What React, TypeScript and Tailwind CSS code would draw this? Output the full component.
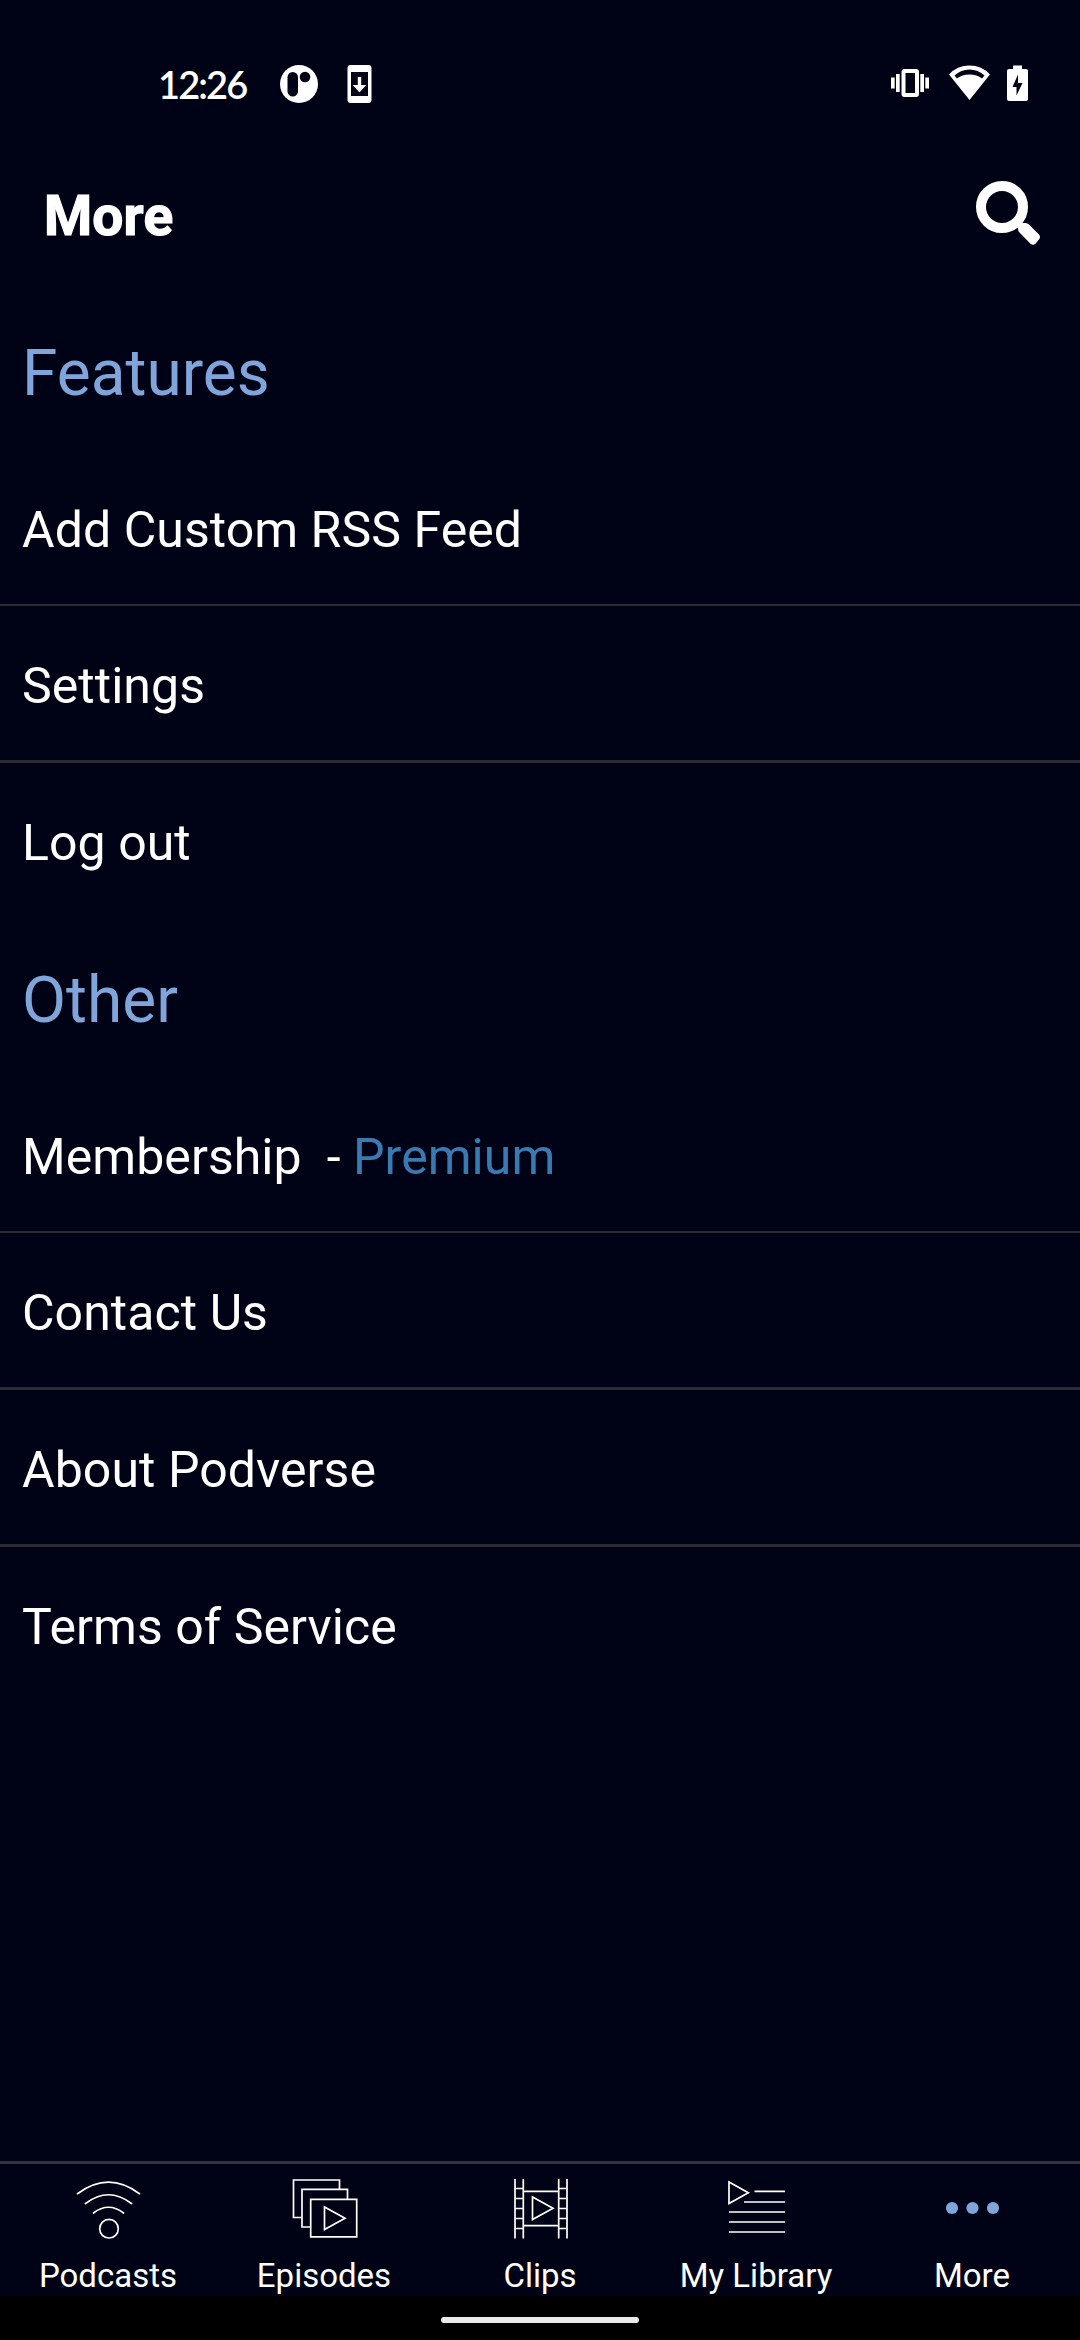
import React from "react";

const sections = [
  {
    title: "Features",
    rows: [
      { label: "Add Custom RSS Feed", box: "h-[158px] border-b-2 pt-[8px]" },
      { label: "Settings", box: "h-[157px] border-b-3 pt-[6px]" },
      { label: "Log out", box: "h-[156px] pt-[4px]" },
    ],
  },
  {
    title: "Other",
    rows: [
      { label: "Membership", extra: "Premium", box: "h-[158px] border-b-2 pt-[8px]" },
      { label: "Contact Us", box: "h-[157px] border-b-3 pt-[6px]" },
      { label: "About Podverse", box: "h-[157px] border-b-3 pt-[6px]" },
      { label: "Terms of Service", box: "h-[156px] pt-[4px]" },
    ],
  },
];

function StatusBar() {
  return (
    <div className="flex h-[140px] items-start justify-between pl-[158px] pr-[50px] pt-[62px] text-white">
      <div className="flex items-center">
        <span className="w-[121px] whitespace-nowrap font-['Lato'] text-[38px] font-semibold leading-[44px] tracking-[-1.9px]">12:26</span>
        <svg className="-mt-px h-[40px] w-[40px]" viewBox="0 0 40 40">
          <circle cx="20" cy="20" r="19" fill="white" />
          <rect x="8.5" y="8" width="10.5" height="24.5" rx="5.2" fill="#000315" />
          <circle cx="26" cy="13" r="5.3" fill="#000315" />
        </svg>
        <svg className="-mt-px ml-[28px] h-[40px] w-[25px]" viewBox="0 0 25 40">
          <path fillRule="evenodd" fill="white" d="M3.5 1h18a3 3 0 0 1 3 3v32a3 3 0 0 1-3 3h-18a3 3 0 0 1-3-3V4a3 3 0 0 1 3-3zM4 8v24h17V8z" />
          <path fill="white" d="M10.8 13h3.4v8h5L12.5 28.500 5.800 21h5z" />
        </svg>
      </div>
      <svg className="h-[40px] w-[140px]" viewBox="890 62 140 40">
        <g fill="white">
          <path fillRule="evenodd" d="M904.500 69h11.500a3 3 0 0 1 3 3v22a3 3 0 0 1-3 3h-11.500a3 3 0 0 1-3-3V72a3 3 0 0 1 3-3zM905.500 73v20h9.500V73z" />
          <path d="M896 74h3.700v18H896zM891 77.500h3.700v11H891zM920.300 74h3.700v18h-3.700zM925.300 77.500h3.700v11h-3.700z" />
          <path fillRule="evenodd" d="M969.500 100 949 74.500Q957 65.500 969.500 65.500T990 74.500zM954.500 75.500 957 78.500Q962 74.500 969.500 74.500T982 78.500L984.500 75.500Q978 69.500 969.500 69.500T954.500 75.500z" />
          <path fillRule="evenodd" d="M1013 65.500h9V69h4a2 2 0 0 1 2 2v28a2 2 0 0 1-2 2h-17a2 2 0 0 1-2-2V71a2 2 0 0 1 2-2h4zM1018 74.500 1012.500 87h4v8.500L1022.500 83h-4.500z" />
        </g>
      </svg>
    </div>
  );
}

function Header() {
  return (
    <header className="flex h-[152px] items-start justify-between pl-[44px] pr-[39px] pt-[40px]">
      <h1 className="pt-px text-[55px] font-bold leading-[70px] tracking-[0.2px] text-white [-webkit-text-stroke:1.2px_white]">More</h1>
      <svg className="h-[66px] w-[66px]" viewBox="975 180 66 66">
        <circle cx="1002" cy="207" r="21" fill="none" stroke="white" strokeWidth="10" />
        <path fill="white" d="M1018 226.500L1022 223H1025.500Q1027.500 223 1029 224.500L1039 234.500Q1041 237 1039 239.500L1035.500 243.700Q1033 246 1030.500 243.700L1019.500 232.500Q1018 231 1018 229z" />
      </svg>
    </header>
  );
}

const play = "M0 0V22.500L20.500 11.250z";

const tabs = [
  {
    label: "Podcasts",
    icon: (
      <svg className="h-[64px] w-[70px]" viewBox="73 2177 70 64" fill="none" stroke="white" strokeWidth="1.700" strokeLinecap="round">
        <path d="M77.500 2193.700Q108.500 2170.500 139.500 2193.700M85.500 2203.500Q108.500 2186 131.500 2203.500M93.500 2213Q108.500 2201.500 123.500 2213" />
        <circle cx="109" cy="2228.700" r="9.300" />
      </svg>
    ),
  },
  {
    label: "Episodes",
    icon: (
      <svg className="h-[64px] w-[70px]" viewBox="289 2177 70 64" fill="none" stroke="white" strokeWidth="1.700">
        <path d="M301.500 2217.500H293.500V2180H339.500V2189M310 2227H302V2189.300H347.500V2199" />
        <path d="M310.700 2199.300h46v37.500h-46z" />
        <path transform="translate(324.500 2207)" d={play} />
      </svg>
    ),
  },
  {
    label: "Clips",
    icon: (
      <svg className="h-[64px] w-[70px]" viewBox="505 2177 70 64" fill="none" stroke="white" strokeWidth="1.700">
        <path d="M515 2179V2238.500M523.300 2179V2238.500M558.700 2179V2238.500M567 2179V2238.500M523 2191.300H559M523 2225.700H559" />
        <path d="M515 2188.500h8M515 2198.500h8M515 2208.500h8M515 2218.500h8M515 2228.500h8M559 2188.500h8M559 2198.500h8M559 2208.500h8M559 2218.500h8M559 2228.500h8" />
        <path transform="translate(532.500 2197)" d={play} />
      </svg>
    ),
  },
  {
    label: "My Library",
    icon: (
      <svg className="h-[64px] w-[70px]" viewBox="721 2177 70 64" fill="none" stroke="white" strokeWidth="1.700">
        <path d="M754.500 2191.300H785M744 2202H785M729 2212H785M729 2222H785M729 2232H785" />
        <path transform="translate(729 2182)" d="M0 0V21.500L19.300 10.750z" />
      </svg>
    ),
  },
  {
    label: "More",
    icon: (
      <svg className="h-[64px] w-[70px]" viewBox="937 2177 70 64" fill="#7fa5da">
        <circle cx="952" cy="2208" r="6.100" />
        <circle cx="972.500" cy="2208" r="6.100" />
        <circle cx="993" cy="2208" r="6.100" />
      </svg>
    ),
  },
];

export default function App() {
  return (
    <div className="flex h-[2340px] w-[1080px] flex-col overflow-hidden bg-[#000315] font-['Roboto',sans-serif]">
      <StatusBar />
      <Header />
      <main className="flex-1">
        {sections.map((s) => (
          <section key={s.title}>
            <h2 className="flex h-[156px] items-center pl-[22px] pt-[8px] text-[64px] leading-none text-[#7fa5da]">{s.title}</h2>
            {s.rows.map((r) => (
              <div key={r.label} className={`flex items-center whitespace-pre border-[#2c2a33] pl-[22px] text-[50px] leading-none tracking-[0.06px] text-white ${r.box}`}>
                {r.label}
                {"extra" in r && (
                  <>
                    <span>{"  - "}</span>
                    <span className="text-[#3a7ab3]">{r.extra}</span>
                  </>
                )}
              </div>
            ))}
          </section>
        ))}
      </main>
      <nav className="grid h-[135px] grid-cols-5 border-t-3 border-[#373435]">
        {tabs.map((t) => (
          <div key={t.label} className="flex flex-col items-center pt-[13px]">
            {t.icon}
            <span className="mt-[15px] whitespace-nowrap text-[33px] leading-[40px] text-white">{t.label}</span>
          </div>
        ))}
      </nav>
      <div className="flex h-[44px] justify-center bg-black pt-[21px]">
        <div className="h-[6px] w-[198px] rounded-full bg-[#ebebeb]" />
      </div>
    </div>
  );
}
